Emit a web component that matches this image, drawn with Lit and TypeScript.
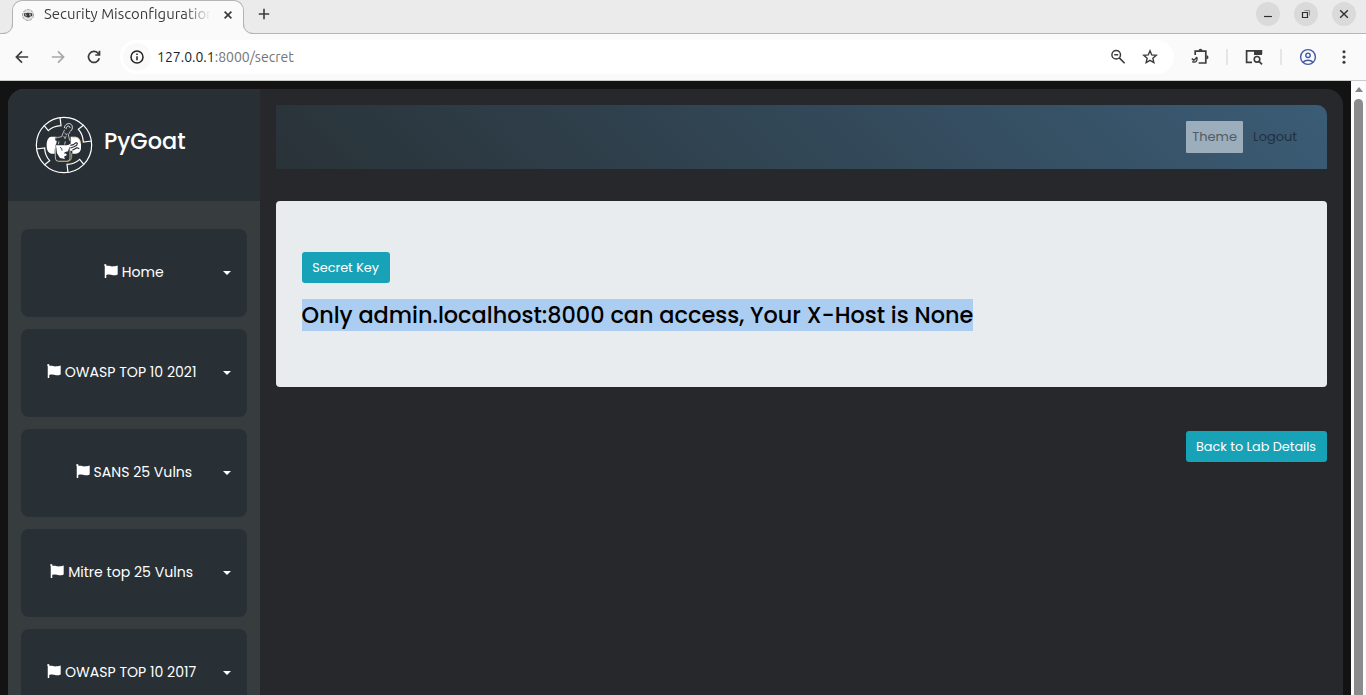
import { LitElement, html, css, svg } from "lit";
import { customElement, property } from "lit/decorators.js";

const ICONS: Record<string, unknown> = {
  back: svg`<path d="M14.2 8H2.600M8 2.400 2.400 8 8 13.600" fill="none" stroke="currentColor" stroke-width="1.7"/>`,
  forward: svg`<path d="M1.800 8h11.600M8 2.400 13.600 8 8 13.600" fill="none" stroke="currentColor" stroke-width="1.7"/>`,
  reload: svg`<path d="M13.3 9.3A5.5 5.5 0 1 1 12 4.200L13.400 5.600M13.500 1.800V6H9.300" fill="none" stroke="currentColor" stroke-width="1.7"/>`,
  info: svg`<circle cx="8" cy="8" r="6" fill="none" stroke="currentColor" stroke-width="1.5"/><path d="M8 7.200v4M8 4.500v1.600" stroke="currentColor" stroke-width="1.5"/>`,
  close: svg`<path d="m4.600 4.600 6.800 6.800m0-6.800-6.800 6.800" stroke="currentColor" stroke-width="1.7"/>`,
  plus: svg`<path d="M8 2.800v10.400M2.800 8h10.400" stroke="currentColor" stroke-width="1.6"/>`,
  minimize: svg`<path d="M4 10.500h8" stroke="currentColor" stroke-width="1.2"/>`,
  restore: svg`<path d="M4.500 6.500h5v5h-5z" fill="none" stroke="currentColor" stroke-width="1.2"/><path d="M6.500 4.500h5v5" fill="none" stroke="#8c8c8c"/>`,
  winclose: svg`<path d="m4.200 4.200 7.600 7.600m0-7.600-7.600 7.600" stroke="currentColor" stroke-width="1.4"/>`,
  zoomout: svg`<circle cx="6.2" cy="5.8" r="4.300" fill="none" stroke="currentColor" stroke-width="1.5"/><path d="m9.300 8.900 5.300 5.300M4.200 5.800h4" stroke="currentColor" stroke-width="1.6"/>`,
  star: svg`<path d="m8 1.800 1.750 4.100 4.500.4-3.400 2.950 1 4.400L8 11.300l-3.850 2.350 1-4.400L1.750 6.300l4.500-.4z" fill="none" stroke="currentColor" stroke-width="1.4"/>`,
  puzzle: svg`<path d="M3.200 6V2.200h10.600V14H6.600" fill="none" stroke="currentColor" stroke-width="1.7"/><path d="M6.500 1.700a2 2 0 0 1 4 0M14.500 6.200a2 2 0 0 1 0 4" fill="currentColor"/><path d="M-.2 9.600 1.900 11.400 5 8M.2 12.600Q5.600 14.600 5 8.200" fill="none" stroke="currentColor" stroke-width="1.400"/>`,
  lens: svg`<path d="M6 13.400H.6V1.800h14.800V5" fill="none" stroke="currentColor" stroke-width="1.7"/><path d="M8 1h8v5H8z" fill="currentColor"/><circle cx="11" cy="10.3" r="2.8" fill="#fafafa" stroke="currentColor" stroke-width="1.6"/><path d="m13 12.400 3 3" stroke="currentColor" stroke-width="1.7"/>`,
  profile: svg`<circle cx="8" cy="8" r="7.400" fill="none" stroke="currentColor" stroke-width="1.4"/><circle cx="8" cy="6.300" r="2.200" fill="none" stroke="currentColor" stroke-width="1.4"/><path d="M3 13.200c2.600-2.700 7.400-2.700 10 0" fill="none" stroke="currentColor" stroke-width="1.4"/>`,
  more: svg`<circle cx="8" cy="2.800" r="1.550"/><circle cx="8" cy="8" r="1.550"/><circle cx="8" cy="13.200" r="1.550"/>`,
  favicon: svg`<circle cx="8" cy="8" r="5.500" fill="#e2e2e2" stroke="#8a8a8a" stroke-width=".8" stroke-dasharray="3 1"/><path d="M4 6.300h2.600l1.400-.8 1.200.8h3v2.700l-2 .6-1.600 1.200-2-.8-2.400-1z" fill="#3a3a3a"/><path d="m5 7.600 1.600.8m2.600-.6 1.800.2" stroke="#fff" stroke-width=".9"/>`,
  flag: svg`<path d="M.2 1.200a1.250 1.250 0 1 1 2.200 1c2.400-.9 4.200.3 6.200.4 1.800 0 3.400-.4 6-1V11.200c-2 .9-3.400 1-5 .8C7.400 11.600 5.400 10.600 2.400 11.800V15H.8V2.400z" fill="currentColor"/>`,
};

const NOTCH = svg`<path d="m48 46 13 16Q76 48 99 47L96 22" />`;

const LOGO = html`<svg class="logo" viewBox="21 18 174 174">
  <g fill="none" stroke="#fff" stroke-width="3.600">
    <circle cx="108" cy="105" r="83"/>
    <g>${NOTCH}</g>
    <g transform="rotate(90 108 105)">${NOTCH}</g>
    <g transform="rotate(180 108 105)">${NOTCH}</g>
    <g transform="rotate(270 108 105)">${NOTCH}</g>
  </g>
  <path d="M70 80h16l-2 20-4 20v11h-9c-9-1-15-10-15-24 0-15 4-26 14-27M128 80h14c11 1 16 10 17 21v12c0 10-6 17-16 18h-10v-8l-14-3-2-14 11-5z" fill="#fff"/>
  <path d="M82 110h44v35q0 9-9 9H92q-10 0-10-10z" fill="#293036" stroke="#fff" stroke-width="2"/>
  <path d="M92 154h27q11-1 12-12v-12" fill="none" stroke="#c7a13b" stroke-width="3"/>
  <path d="M131 82h12c9 1 14 8 15 19" fill="none" stroke="#c7a13b" stroke-width="1.500"/>
  <path d="M84 106h34l6 6-4 12-10 3 7 8-9 5 3 7-15-3-9-14z" fill="#fff"/>
  <path d="M96 112q8 2 6 10M108 130l8-3" fill="none" stroke="#293036" stroke-width="2.500"/>
  <path d="M80 84c7-5 14-4 20-5l6-17 10-5 10 6-3 12 3 16-5 14-8-2-4-6-10 1-5 7-6-1z" fill="#293036"/>
  <path d="M78 88c6-7 13-5 23-8l5-13 4-8M126 66l-5 8 4 18M86 92l-3 12M93 94l-2 9M112 94l-2 10" fill="none" stroke="#fff" stroke-width="2"/>
  <path d="m110 68 4 6 5-3M107 78l4 8 4-9" fill="none" stroke="#fff" stroke-width="1.800"/>
  <path d="M109 54c2-17 25-18 24-1 0 6-4 10-8 12M114 57c1-12 13-10 12-3" fill="none" stroke="#fff" stroke-width="2.600"/>
  <path d="m127 106 9-2 8-6 4 2-2 6-8 4-11 4m6 7 14-8 7 3" stroke="#293036" stroke-width="3.400" fill="none"/>
</svg>`;

const icon = (name: string, size = 16) =>
  html`<svg viewBox="0 0 16 16" width=${size} height=${size} fill="currentColor" style="display:block;overflow:visible">${ICONS[name]}</svg>`;

@customElement("browser-chrome")
export class BrowserChrome extends LitElement {
  static styles = css`
    :host { display: block; height: 81px; flex: none; font-family: Ubuntu, "Noto Sans", sans-serif; color: #3c3c3c; }
    .strip { height: 34px; box-sizing: border-box; display: flex; background: #ebebeb; border-bottom: 1px solid #b5b5b5; padding-right: 10px; }
    .tab { width: 232px; height: 34px; margin-left: 12px; box-sizing: border-box; display: flex; align-items: center; padding: 0 7px 6px 7px; background: #fafafa; border: 1px solid #b5b5b5; border-bottom: 0; border-radius: 10px 10px 0 0; position: relative; }
    .foot { position: absolute; bottom: 0; width: 11px; height: 11px; overflow: visible; }
    .foot.left { left: -11px; }
    .foot.right { right: -11px; }
    .title { width: 167px; margin-left: 8px; font-size: 14.900px; line-height: 20px; margin-top: -1px; white-space: nowrap; overflow: hidden; mask-image: linear-gradient(90deg, #000 84%, transparent 100%); flex: none; }
    .x { margin-left: 9px; }
    .plus { margin: 6px auto 0 12px; }
    .win { width: 24px; height: 24px; border-radius: 50%; background: #dadada; display: grid; place-items: center; margin-top: 2px; color: #2e2e2e; }
    .wins { display: flex; gap: 14px; }
    .bar { height: 47px; box-sizing: border-box; border-bottom: 1px solid #c9cdc9; background: #fafafa; display: flex; align-items: center; padding: 0 14px; border-top-right-radius: 10px; }
    .nav { display: flex; gap: 20px; }
    .off { color: #a8a8a8; }
    .url { height: 34px; width: 1054px; margin-left: 18px; background: #fff; border-radius: 17px; display: flex; align-items: center; padding: 0 16px 0 3px; box-sizing: border-box; }
    .site { width: 28px; height: 28px; border-radius: 50%; background: #f9f9f9; display: grid; place-items: center; margin-right: 6px; color: #222; }
    .address { flex: 1; font-size: 14px; color: #757575; }
    .host { color: #1f1f1f; }
    .actions { display: flex; gap: 16px; }
    .tools { display: flex; align-items: center; margin-left: 18px; }
    .sep { width: 2px; height: 16px; margin: 0 18px; background: #e5e5e5; }
    .profile { color: #4259a3; }
    .more { margin-left: 20px; }
  `;
  render() {
    return html`
      <div class="strip">
        <div class="tab">
          <svg class="foot left" viewBox="0 0 11 11"><path d="M0 11Q11 11 11 0H12V11Z" fill="#fafafa"/><path d="M0 10.500Q10.500 10.500 10.500 0" fill="none" stroke="#b5b5b5"/><path d="M11.500 0v10" stroke="#fafafa"/></svg>
          ${icon("favicon")}
          <div class="title">Security Misconfiguration</div>
          <div class="x">${icon("close")}</div>
          <svg class="foot right" viewBox="0 0 11 11"><path d="M11 11Q0 11 0 0H-1V11Z" fill="#fafafa"/><path d="M11 10.500Q.5 10.500 .5 0" fill="none" stroke="#b5b5b5"/><path d="M-.5 0v10" stroke="#fafafa"/></svg>
        </div>
        <div class="plus">${icon("plus")}</div>
        <div class="wins">
          <div class="win">${icon("minimize")}</div>
          <div class="win">${icon("restore")}</div>
          <div class="win">${icon("winclose")}</div>
        </div>
      </div>
      <div class="bar">
        <div class="nav">${icon("back")}<span class="off">${icon("forward")}</span>${icon("reload")}</div>
        <div class="url">
          <div class="site">${icon("info")}</div>
          <div class="address"><span class="host">127.0.0.1</span>:8000/secret</div>
          <div class="actions">${icon("zoomout")}${icon("star")}</div>
        </div>
        <div class="tools">
          ${icon("puzzle")}
          <span class="sep"></span>
          ${icon("lens")}
          <span class="sep"></span>
          <span class="profile">${icon("profile")}</span>
          <span class="more">${icon("more")}</span>
        </div>
      </div>`;
  }
}

@customElement("menu-item")
export class MenuItem extends LitElement {
  @property() label = "";
  @property({ type: Boolean }) wide = false;
  static styles = css`
    :host { display: block; flex: none; }
    .item { height: 88px; box-sizing: border-box; display: flex; align-items: center; padding: 0 16px 2px; border-radius: 8px; background: #293035; color: #fff; font-size: 14.080px; }
    .text { flex: 1; display: flex; justify-content: center; align-items: center; gap: 2.700px; padding-left: 8px; white-space: nowrap; }
    .text.wide { padding: 0 16.500px 0 0; }
    .flag { padding-bottom: 1px; }
    .caret { border: 4px solid transparent; border-top-color: #fff; border-bottom: 0; margin-top: 2px; }
  `;
  render() {
    return html`<div class="item">
      <div class="text ${this.wide ? "wide" : ""}"><span class="flag">${icon("flag", 15)}</span><span>${this.label}</span></div>
      <span class="caret"></span>
    </div>`;
  }
}

@customElement("app-root")
export class AppRoot extends LitElement {
  static styles = css`
    :host { display: flex; flex-direction: column; width: 1366px; height: 695px; overflow: hidden; font-family: Poppins, Inter, sans-serif; }
    .view { flex: 1; min-height: 0; display: flex; background: #131313; }
    .page { flex: 1; padding: 8px 8px 0; display: flex; min-height: 0; }
    .shell { flex: 1; display: flex; background: #27282c; border-radius: 16px 16px 0 0; overflow: hidden; }
    .side { width: 252px; flex: none; background: #373c3f; display: flex; flex-direction: column; overflow: hidden; }
    .brand { height: 112px; flex: none; box-sizing: border-box; background: #293035; display: flex; align-items: center; gap: 11px; padding: 0 27px; color: #fff; font-size: 22.400px; font-weight: 500; }
    .logo { width: 58px; height: 58px; }
    .name { padding-bottom: 9px; }
    .menu { display: flex; flex-direction: column; gap: 12px; padding: 28px 13px 0; }
    .main { flex: 1; padding: 16px; display: flex; flex-direction: column; }
    .topbar { height: 64px; box-sizing: border-box; background: linear-gradient(45deg, #293237, #3b5c76); border-radius: 0 10px 0 0; display: flex; justify-content: flex-end; align-items: center; padding-right: 30px; gap: 10px; font-size: 12.950px; color: #20303d; }
    .theme { width: 57px; height: 32px; background: #9cadbb; border-radius: 1px; color: #515b65; display: grid; place-items: center; }
    .card { height: 186px; box-sizing: border-box; margin-top: 32px; background: #e9ecef; border-radius: 4px; padding: 51px 25.600px 0; }
    .btn { display: flex; width: fit-content; box-sizing: border-box; height: 31px; align-items: center; justify-content: center; border-radius: 3px; background: #18a2b8; color: #fff; font-size: 12.800px; white-space: nowrap; }
    .key { width: 88px; }
    .back { width: 141px; align-self: flex-end; margin-top: 44px; padding-right: 1px; }
    .msg { margin: 16px 0 0; width: 671px; height: 32px; line-height: 32px; background: #abcdf1; color: #000; font-size: 22.400px; font-weight: 500; white-space: nowrap; }
    .scroll { width: 15px; background: #fcfcfc; display: flex; flex-direction: column; align-items: center; }
    .up { border: 4.500px solid transparent; border-bottom: 5px solid #858585; border-top: 0; margin-top: 6px; }
    .thumb { width: 9px; flex: 1; margin-top: 7px; background: #8b8b8b; border-radius: 5px 5px 0 0; }
  `;
  menu = [
    { label: "Home", wide: false },
    { label: "OWASP TOP 10 2021", wide: true },
    { label: "SANS 25 Vulns", wide: false },
    { label: "Mitre top 25 Vulns", wide: true },
    { label: "OWASP TOP 10 2017", wide: true },
  ];
  render() {
    return html`
      <browser-chrome></browser-chrome>
      <div class="view">
        <div class="page">
          <div class="shell">
            <div class="side">
              <div class="brand">${LOGO}<span class="name">PyGoat</span></div>
              <div class="menu">${this.menu.map((m) => html`<menu-item label=${m.label} ?wide=${m.wide}></menu-item>`)}</div>
            </div>
            <div class="main">
              <div class="topbar"><span class="theme">Theme</span><span class="logout">Logout</span></div>
              <div class="card">
                <span class="btn key">Secret Key</span>
                <h4 class="msg">Only admin.localhost:8000 can access, Your X-Host is None</h4>
              </div>
              <span class="btn back">Back to Lab Details</span>
            </div>
          </div>
        </div>
        <div class="scroll"><span class="up"></span><span class="thumb"></span></div>
      </div>`;
  }
}
